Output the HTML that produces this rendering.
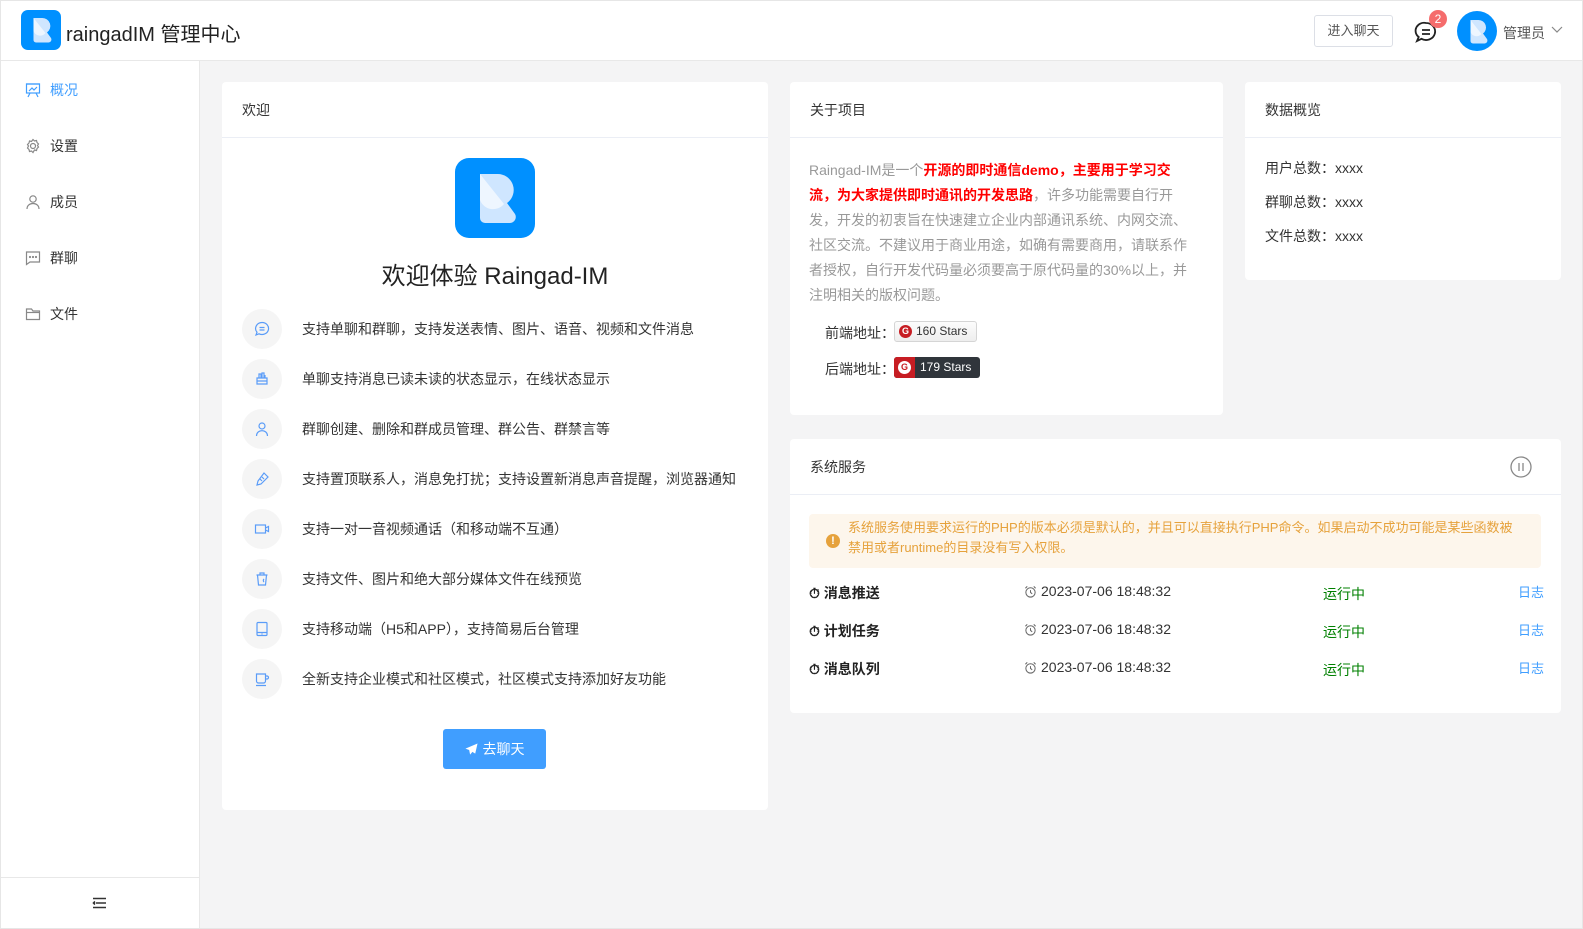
<!DOCTYPE html>
<html><head><meta charset="utf-8"><style>
*{box-sizing:border-box;margin:0;padding:0}
body{width:1583px;height:929px;overflow:hidden;font-family:"Liberation Sans","Noto Sans CJK SC",sans-serif;color:#333;background:#f4f4f5;position:relative;font-size:14px}
.frame{position:absolute;left:0;top:0;width:1583px;height:929px;border:1px solid #e6e6e6;pointer-events:none;z-index:9}
.header{position:absolute;left:0;top:0;width:1583px;height:61px;background:#fff;border-bottom:1px solid #e8e8e8}
.side{position:absolute;left:0;top:61px;width:200px;height:868px;background:#fff;border-right:1px solid #e8e8e8}
.card{position:absolute;background:#fff;border-radius:4px}
.ch{height:56px;border-bottom:1px solid #ebeef5;padding-left:20px;line-height:56px;font-size:14px;color:#333}
.a{position:absolute;white-space:nowrap}
.mi{position:absolute;left:25px;font-size:14px;color:#333;display:flex;align-items:center;gap:9px}
.feat{position:absolute;left:20px;display:flex;align-items:center}
.circ{width:40px;height:40px;border-radius:50%;background:#f5f5f5;display:flex;align-items:center;justify-content:center}
.feat span{margin-left:20px;font-size:14px;color:#333}
.red{color:#f00;font-weight:bold}
.clk{vertical-align:-2px;margin-right:4px}
</style></head><body>
<div class="header">
 <svg class="a" style="left:21px;top:10px" width="40" height="40" viewBox="0 0 80 80"><rect width="80" height="80" rx="14" fill="#0090ff"/><path d="M25 16h17a16 16 0 0 1 10 29l8 11a6 6 0 0 1-5 9H30a5 5 0 0 1-5-5z" fill="#cfe6ff"/><path d="M25 16l24 30a14 14 0 0 1-24-4z" fill="#eef6ff"/></svg>
 <div class="a" style="left:66px;top:18px;font-size:20px;color:#222">raingadIM 管理中心</div>
 <div class="a" style="left:1314px;top:15px;width:79px;height:32px;border:1px solid #dcdfe6;border-radius:3px;text-align:center;line-height:30px;font-size:13px;color:#555">进入聊天</div>
 <svg class="a" style="left:1414px;top:20px" width="24" height="24" viewBox="0 0 24 24" fill="none" stroke="#222" stroke-width="1.8"><path d="M12 3a9 8.5 0 1 1-4.5 15.8L3 21l1.7-4A8.5 8 0 0 1 12 3z"/><path d="M8 10h8M8 14h8"/></svg>
 <div class="a" style="left:1429px;top:10px;width:18px;height:18px;border-radius:9px;background:#f56c6c;color:#fff;font-size:12px;text-align:center;line-height:18px">2</div>
 <div class="a" style="left:1457px;top:11px;width:40px;height:40px;border-radius:50%;background:#0090ff;overflow:hidden"><svg width="40" height="40" viewBox="0 0 80 80"><path d="M27 18h16a15 15 0 0 1 9 27l8 11a6 6 0 0 1-5 9H32a5 5 0 0 1-5-5z" fill="#cfe6ff"/><path d="M27 18l22 28a13 13 0 0 1-22-4z" fill="#eef6ff"/></svg></div>
 <div class="a" style="left:1503px;top:23px;font-size:14px;color:#555">管理员</div>
 <svg class="a" style="left:1551px;top:26px" width="12" height="8" viewBox="0 0 12 8" fill="none" stroke="#888" stroke-width="1.2"><path d="M1 1l5 5 5-5"/></svg>
</div>
<div class="side">
 <div class="mi" style="top:19px;color:#409eff"><svg width="16" height="16" viewBox="0 0 16 16" fill="none" stroke="#409eff" stroke-width="1.2"><rect x="1.5" y="2" width="13" height="9"/><path d="M4 9l3-3 2 2 3-3M5 11l-2 4M11 11l2 4M1 2h14"/></svg>概况</div>
 <div class="mi" style="top:75px"><svg width="16" height="16" viewBox="0 0 16 16" fill="none" stroke="#888" stroke-width="1.2"><circle cx="8" cy="8" r="2.5"/><path d="M8 1.5l1.5 1.5 2-.5.5 2 1.5 1.5-1 1.5 1 1.5-1.5 1.5-.5 2-2-.5L8 14.5 6.5 13l-2 .5-.5-2L2.5 10l1-2-1-1.5L4 5l.5-2 2 .5z"/></svg>设置</div>
 <div class="mi" style="top:131px"><svg width="16" height="16" viewBox="0 0 16 16" fill="none" stroke="#888" stroke-width="1.2"><circle cx="8" cy="5" r="3.2"/><path d="M2 15c0-3.5 2.7-5.5 6-5.5s6 2 6 5.5"/></svg>成员</div>
 <div class="mi" style="top:187px"><svg width="16" height="16" viewBox="0 0 16 16" fill="none" stroke="#888" stroke-width="1.2"><path d="M1.5 2h13v10H5l-3.5 2.5z"/><circle cx="5" cy="7" r=".5" fill="#888"/><circle cx="8" cy="7" r=".5" fill="#888"/><circle cx="11" cy="7" r=".5" fill="#888"/></svg>群聊</div>
 <div class="mi" style="top:243px"><svg width="16" height="16" viewBox="0 0 16 16" fill="none" stroke="#888" stroke-width="1.2"><path d="M1.5 3h5l1.5 2h6.5v8.5h-13z"/><path d="M1.5 6.5h13"/></svg>文件</div>
 <div class="a" style="left:0;top:816px;width:199px;border-top:1px solid #e8e8e8;height:52px"></div>
 <svg class="a" style="left:92px;top:836px" width="14" height="12" viewBox="0 0 14 12" stroke="#333" stroke-width="1.6"><path d="M1 1.5h13M4 6h10M1 10.5h13M3 4.5L1.5 6 3 7.5"/></svg>
</div>

<div class="card" style="left:222px;top:82px;width:546px;height:728px">
 <div class="ch">欢迎</div>
 <svg class="a" style="left:233px;top:76px" width="80" height="80" viewBox="0 0 80 80"><rect width="80" height="80" rx="14" fill="#0090ff"/><path d="M25 16h17a16 16 0 0 1 10 29l8 11a6 6 0 0 1-5 9H30a5 5 0 0 1-5-5z" fill="#cfe6ff"/><path d="M25 16l24 30a14 14 0 0 1-24-4z" fill="#eef6ff"/></svg>
 <div class="a" style="left:0;width:546px;text-align:center;top:174px;font-size:24px;color:#222">欢迎体验 Raingad-IM</div>
 <div class="feat" style="top:227px"><div class="circ"><svg width="16" height="16" viewBox="0 0 16 16" fill="none" stroke="#5a9cf8" stroke-width="1.2"><path d="M8 1.5a6.5 6 0 1 1-3 11.3L2 14l1-2.8A6.5 6 0 0 1 8 1.5z"/><path d="M5.5 6.5h5M5.5 9h5"/></svg></div><span>支持单聊和群聊，支持发送表情、图片、语音、视频和文件消息</span></div>
 <div class="feat" style="top:277px"><div class="circ"><svg width="16" height="16" viewBox="0 0 16 16" fill="none" stroke="#5a9cf8" stroke-width="1.2"><path d="M3 7h10v6H3zM3 10h10M5 7V3h2v4M8 7V2h2v5M11 7V4"/></svg></div><span>单聊支持消息已读未读的状态显示，在线状态显示</span></div>
 <div class="feat" style="top:327px"><div class="circ"><svg width="16" height="16" viewBox="0 0 16 16" fill="none" stroke="#5a9cf8" stroke-width="1.2"><circle cx="8" cy="5" r="3"/><path d="M2.5 15c0-3.3 2.5-5.3 5.5-5.3s5.5 2 5.5 5.3"/></svg></div><span>群聊创建、删除和群成员管理、群公告、群禁言等</span></div>
 <div class="feat" style="top:377px"><div class="circ"><svg width="16" height="16" viewBox="0 0 16 16" fill="none" stroke="#5a9cf8" stroke-width="1.2"><path d="M10 2l4 4-7 7-4 1 1-4z"/><path d="M6 8l2 2M8 6l2 2"/></svg></div><span>支持置顶联系人，消息免打扰；支持设置新消息声音提醒，浏览器通知</span></div>
 <div class="feat" style="top:427px"><div class="circ"><svg width="16" height="16" viewBox="0 0 16 16" fill="none" stroke="#5a9cf8" stroke-width="1.2"><rect x="1.5" y="4" width="10" height="8"/><path d="M11.5 7l3-1.5v5l-3-1.5"/></svg></div><span>支持一对一音视频通话（和移动端不互通）</span></div>
 <div class="feat" style="top:477px"><div class="circ"><svg width="16" height="16" viewBox="0 0 16 16" fill="none" stroke="#5a9cf8" stroke-width="1.2"><path d="M2.5 4h11M6 4V2h4v2M3.5 4l1 10h7l1-10M10 8a2 2 0 0 0 0 3"/></svg></div><span>支持文件、图片和绝大部分媒体文件在线预览</span></div>
 <div class="feat" style="top:527px"><div class="circ"><svg width="16" height="16" viewBox="0 0 16 16" fill="none" stroke="#5a9cf8" stroke-width="1.2"><rect x="3" y="1.5" width="10" height="13" rx="1"/><path d="M3 11.5h10M7.5 13h1"/></svg></div><span>支持移动端（H5和APP），支持简易后台管理</span></div>
 <div class="feat" style="top:577px"><div class="circ"><svg width="16" height="16" viewBox="0 0 16 16" fill="none" stroke="#5a9cf8" stroke-width="1.2"><path d="M2.5 3h9v7a2 2 0 0 1-2 2h-5a2 2 0 0 1-2-2zM11.5 5h1.5a1.5 1.5 0 0 1 0 3h-1.5M2 14.5h10"/></svg></div><span>全新支持企业模式和社区模式，社区模式支持添加好友功能</span></div>
 <div class="a" style="left:221px;top:647px;width:103px;height:40px;border-radius:3px;background:#409eff;color:#fff;font-size:14px;text-align:center;line-height:40px"><svg style="vertical-align:-2px;margin-right:5px" width="13" height="13" viewBox="0 0 14 14" fill="#fff"><path d="M13.5.5L.5 6l4 1.5 1 5 2.5-3 3 2z"/></svg>去聊天</div>
</div>

<div class="card" style="left:790px;top:82px;width:433px;height:333px">
 <div class="ch">关于项目</div>
 <div class="a" style="left:19px;top:76px;width:385px;white-space:normal;font-size:14px;line-height:25px;color:#999">Raingad-IM是一个<span class="red">开源的即时通信demo，主要用于学习交流，为大家提供即时通讯的开发思路</span>，许多功能需要自行开发，开发的初衷旨在快速建立企业内部通讯系统、内网交流、社区交流。不建议用于商业用途，如确有需要商用，请联系作者授权，自行开发代码量必须要高于原代码量的30%以上，并注明相关的版权问题。</div>
 <div class="a" style="left:35px;top:241px;color:#333">前端地址：</div>
 <div class="a" style="left:104px;top:239px;height:21px;width:83px;border:1px solid #d5d5d5;border-radius:3px;background:linear-gradient(#fcfcfc,#eee);font-size:12px;line-height:19px;color:#333;padding-left:21px">160 Stars<span style="position:absolute;left:4px;top:3px;width:13px;height:13px;border-radius:50%;background:#c71d23;color:#fff;font-size:9px;line-height:13px;text-align:center;font-weight:bold">G</span></div>
 <div class="a" style="left:35px;top:277px;color:#333">后端地址：</div>
 <div class="a" style="left:104px;top:275px;height:21px;width:86px;border-radius:3px;background:#30353b;font-size:12px;line-height:21px;color:#fff;padding-left:26px;overflow:hidden">179 Stars<span style="position:absolute;left:0;top:0;width:21px;height:21px;background:#c71d23"></span><span style="position:absolute;left:4px;top:4px;width:13px;height:13px;border-radius:50%;background:#fff;color:#c71d23;font-size:9px;line-height:13px;text-align:center;font-weight:bold">G</span></div>
</div>

<div class="card" style="left:1245px;top:82px;width:316px;height:198px">
 <div class="ch">数据概览</div>
 <div class="a" style="left:20px;top:76px;color:#333">用户总数：xxxx</div>
 <div class="a" style="left:20px;top:110px;color:#333">群聊总数：xxxx</div>
 <div class="a" style="left:20px;top:144px;color:#333">文件总数：xxxx</div>
</div>

<div class="card" style="left:790px;top:439px;width:771px;height:274px">
 <div class="ch">系统服务</div>
 <svg class="a" style="left:720px;top:17px" width="22" height="22" viewBox="0 0 22 22" fill="none" stroke="#888" stroke-width="1.3"><circle cx="11" cy="11" r="10"/><path d="M9 7v8M13 7v8"/></svg>
 <div class="a" style="left:19px;top:75px;width:732px;height:54px;background:#fdf6ec;border-radius:4px;white-space:normal;padding:4px 20px 0 39px;font-size:13px;line-height:20px;color:#e6a23c">系统服务使用要求运行的PHP的版本必须是默认的，并且可以直接执行PHP命令。如果启动不成功可能是某些函数被禁用或者runtime的目录没有写入权限。<span style="position:absolute;left:17px;top:20px;width:14px;height:14px;border-radius:50%;background:#e6a23c;color:#fff;font-size:11px;font-weight:bold;line-height:14px;text-align:center">!</span></div>
 <div class="a" style="left:19px;top:144px;font-weight:bold;color:#222">⏱ 消息推送</div>
 <div class="a" style="left:19px;top:182px;font-weight:bold;color:#222">⏱ 计划任务</div>
 <div class="a" style="left:19px;top:220px;font-weight:bold;color:#222">⏱ 消息队列</div>
 <div class="a" style="left:234px;top:144px;font-size:14px;color:#333"><svg class="clk" width="13" height="13" viewBox="0 0 14 14" fill="none" stroke="#666" stroke-width="1.1"><circle cx="7" cy="8" r="5"/><path d="M7 5.5V8l1.8 1.5M1.5 3.5l2-2M12.5 3.5l-2-2"/></svg>2023-07-06 18:48:32</div>
 <div class="a" style="left:234px;top:182px;font-size:14px;color:#333"><svg class="clk" width="13" height="13" viewBox="0 0 14 14" fill="none" stroke="#666" stroke-width="1.1"><circle cx="7" cy="8" r="5"/><path d="M7 5.5V8l1.8 1.5M1.5 3.5l2-2M12.5 3.5l-2-2"/></svg>2023-07-06 18:48:32</div>
 <div class="a" style="left:234px;top:220px;font-size:14px;color:#333"><svg class="clk" width="13" height="13" viewBox="0 0 14 14" fill="none" stroke="#666" stroke-width="1.1"><circle cx="7" cy="8" r="5"/><path d="M7 5.5V8l1.8 1.5M1.5 3.5l2-2M12.5 3.5l-2-2"/></svg>2023-07-06 18:48:32</div>
 <div class="a" style="left:533px;top:145px;color:#008000">运行中</div>
 <div class="a" style="left:533px;top:183px;color:#008000">运行中</div>
 <div class="a" style="left:533px;top:221px;color:#008000">运行中</div>
 <div class="a" style="left:728px;top:143px;color:#409eff;font-size:13px">日志</div>
 <div class="a" style="left:728px;top:181px;color:#409eff;font-size:13px">日志</div>
 <div class="a" style="left:728px;top:219px;color:#409eff;font-size:13px">日志</div>
</div>
<div class="frame"></div>
</body></html>
